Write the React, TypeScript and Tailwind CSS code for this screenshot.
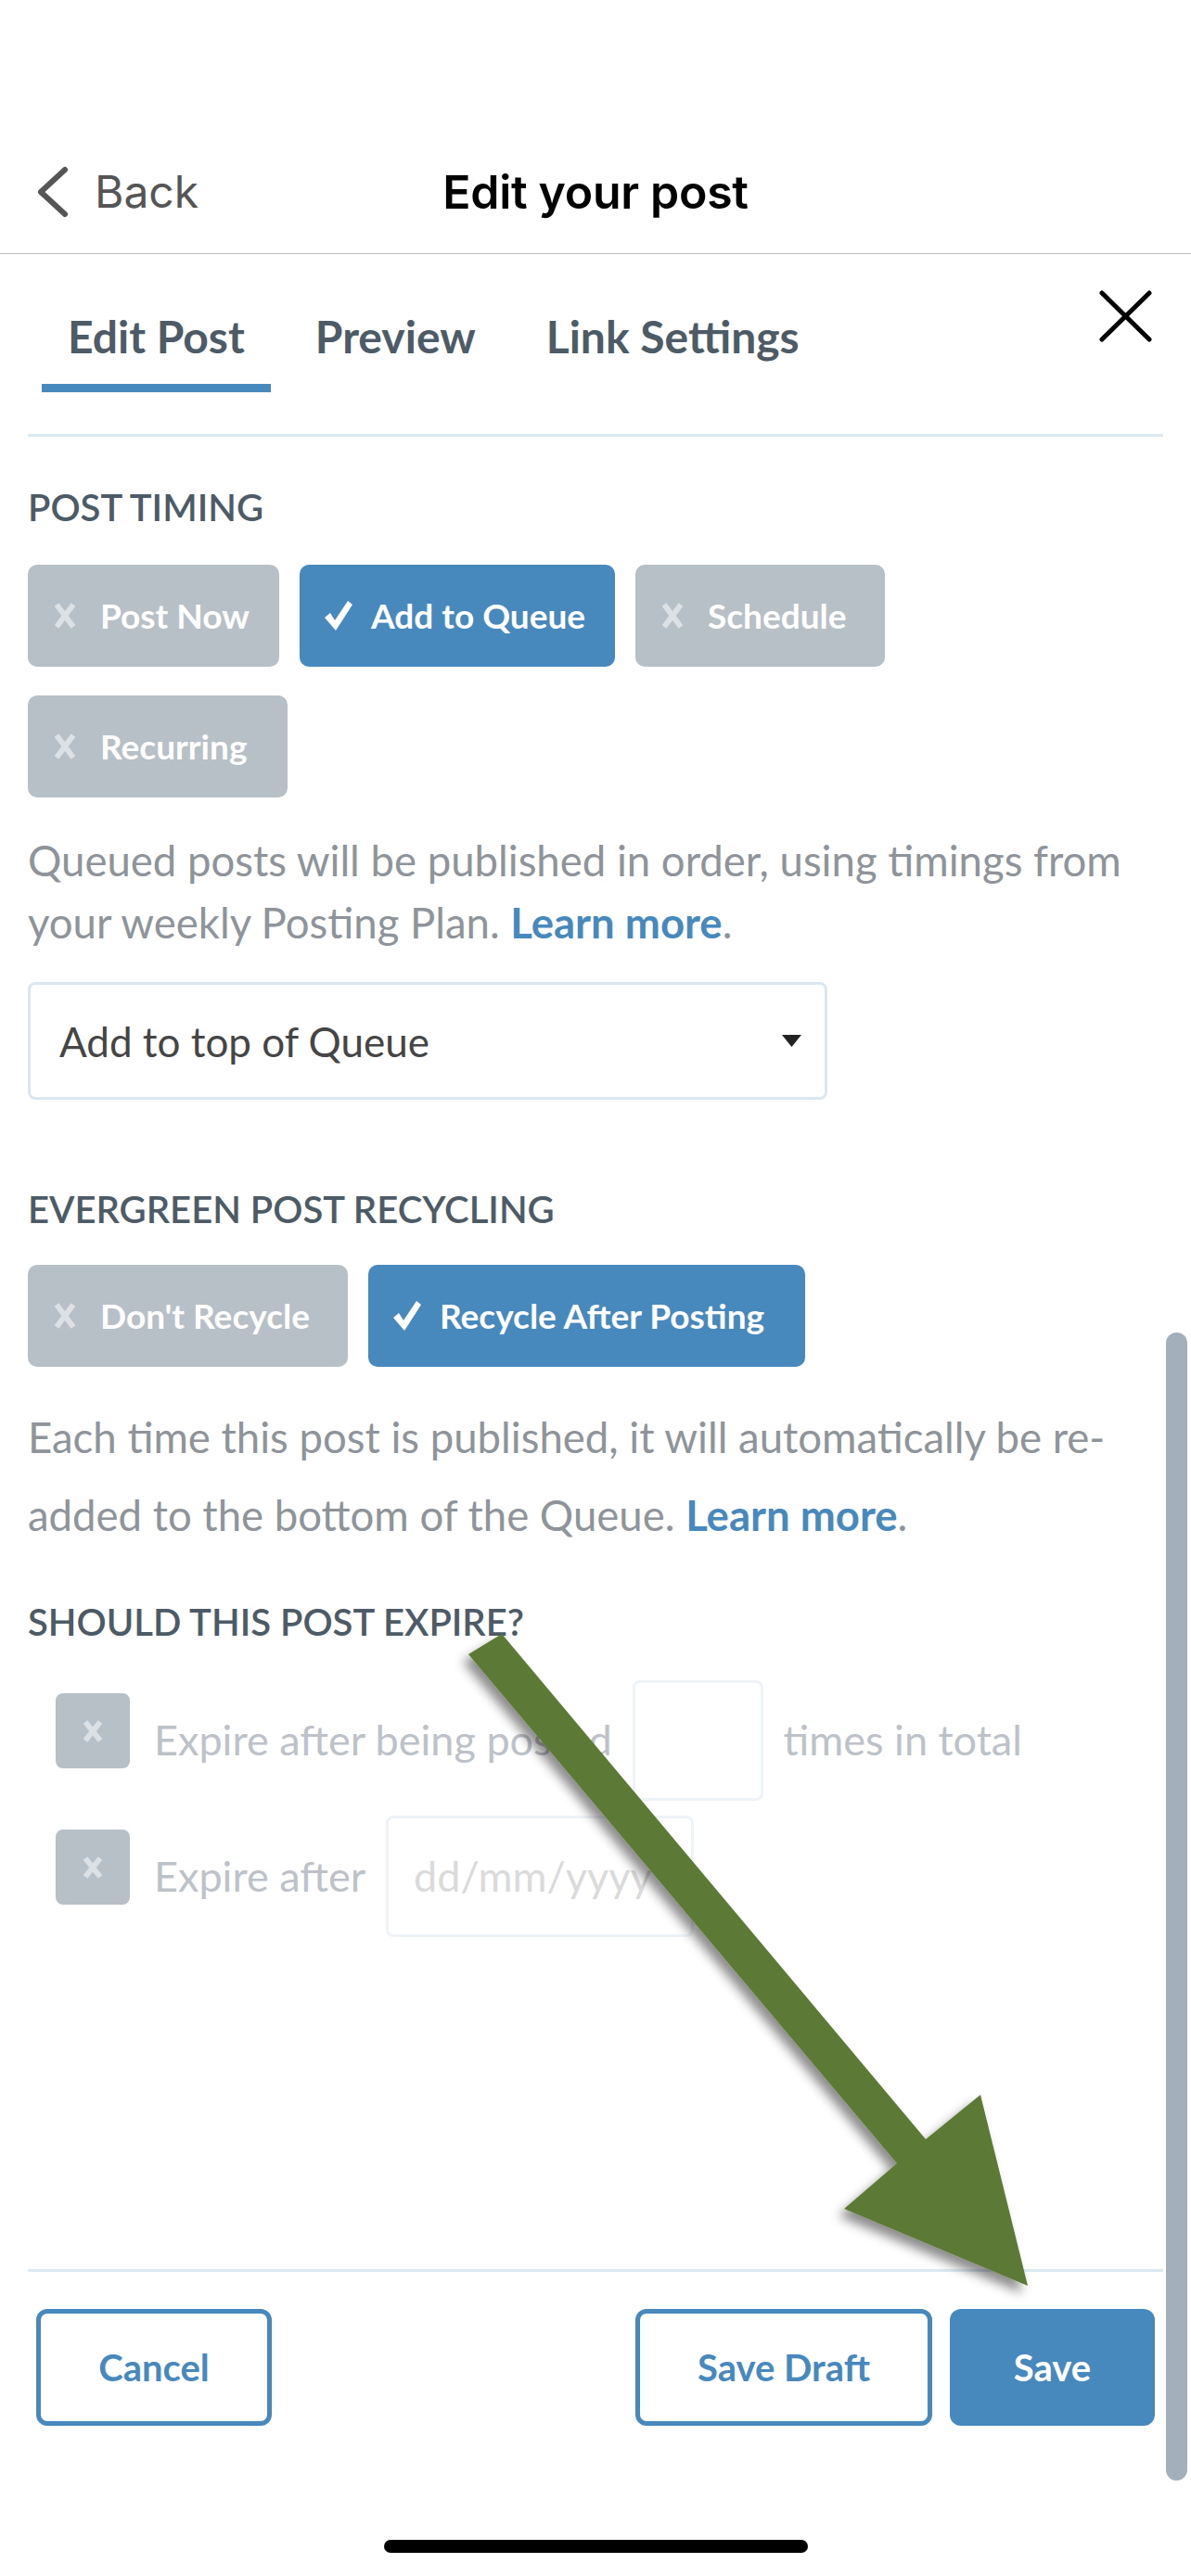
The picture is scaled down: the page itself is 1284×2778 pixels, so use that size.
import React from "react";

const XSmall = ({ w = 24, h = 30, color = "#dde1e4", sw = 6 }: { w?: number; h?: number; color?: string; sw?: number }) => (
  <svg width={w} height={h} viewBox={`0 0 ${w} ${h}`} className="shrink-0">
    <line x1="3" y1="3" x2={w - 3} y2={h - 3} stroke={color} strokeWidth={sw} strokeLinecap="butt" />
    <line x1={w - 3} y1="3" x2="3" y2={h - 3} stroke={color} strokeWidth={sw} strokeLinecap="butt" />
  </svg>
);

const Check = () => (
  <svg width="34" height="34" viewBox="0 0 34 34" className="shrink-0">
    <path d="M2 19 L8 14 L13 22 L27 1 L32 5 L14 33 Z" fill="white" />
  </svg>
);

function Toggle({ label, active, width }: { label: string; active?: boolean; width: string }) {
  if (active) {
    return (
      <div className={`h-[110px] ${width} rounded-[10px] bg-[#4889bd] flex items-center pl-[25px] gap-[18px] text-white font-bold text-[37px]`}>
        <Check />
        <span>{label}</span>
      </div>
    );
  }
  return (
    <div className={`h-[110px] ${width} rounded-[10px] bg-[#b8c0c7] flex items-center pl-[28px] gap-[26px] text-white font-bold text-[37px]`}>
      <XSmall />
      <span>{label}</span>
    </div>
  );
}

export default function App() {
  return (
    <div className="relative w-[1284px] h-[2778px] bg-white overflow-hidden flex flex-col font-['Lato',sans-serif]">
      {/* status bar space */}
      <div className="h-[141px] shrink-0" />
      {/* nav bar */}
      <div className="h-[132px] shrink-0 grid grid-cols-[1fr_auto_1fr] items-center font-['Inter',sans-serif]">
        <div className="flex items-center pl-[40px] gap-[28px] text-[#555555] text-[48px]">
          <svg width="34" height="56" viewBox="0 0 34 56">
            <polyline points="30,4 4,28 30,52" fill="none" stroke="#555555" strokeWidth="6" strokeLinecap="round" strokeLinejoin="round" />
          </svg>
          <span className="leading-none">Back</span>
        </div>
        <div className="text-[50px] font-semibold text-black leading-none tracking-[-0.3px]">Edit your post</div>
        <div />
      </div>
      <div className="h-px bg-[#bdbdbd] shrink-0" />

      {/* tabs */}
      <div className="shrink-0 pt-[39px] pl-[45px] pr-[42px] flex items-start">
        <div className="flex gap-[20px] mt-[20px]">
          <div className="flex flex-col">
            <span className="px-[28px] leading-[60px] text-[48px] font-bold text-[#4d5b67]">Edit Post</span>
            <div className="mt-[21px] h-[9px] bg-[#4889bd]" />
          </div>
          <div className="flex flex-col">
            <span className="px-[28px] leading-[60px] text-[48px] font-bold text-[#4d5b67]">Preview</span>
            <div className="mt-[21px] h-[9px]" />
          </div>
          <div className="flex flex-col">
            <span className="px-[28px] leading-[60px] text-[48px] font-bold text-[#4d5b67]">Link Settings</span>
            <div className="mt-[21px] h-[9px]" />
          </div>
        </div>
        <svg className="ml-auto" width="57" height="56" viewBox="0 0 57 56">
          <line x1="3" y1="3" x2="54" y2="53" stroke="#000" strokeWidth="5" strokeLinecap="round" />
          <line x1="54" y1="3" x2="3" y2="53" stroke="#000" strokeWidth="5" strokeLinecap="round" />
        </svg>
      </div>
      <div className="mt-[45px] mx-[30px] h-[3px] bg-[#dde9f2] shrink-0" />

      {/* content */}
      <div className="flex-1 px-[30px]">
        <div className="mt-[51px] leading-[50px] text-[40px] font-semibold text-[#4d5b67]">POST TIMING</div>
        <div className="mt-[37px] max-w-[1000px] flex flex-wrap gap-x-[22px] gap-y-[31px]">
          <Toggle label="Post Now" width="w-[271px]" />
          <Toggle label="Add to Queue" width="w-[340px]" active />
          <Toggle label="Schedule" width="w-[269px]" />
          <Toggle label="Recurring" width="w-[280px]" />
        </div>
        <p className="mt-[34px] leading-[67px] text-[45.5px] text-[#8e949a]">
          Queued posts will be published in order, using timings from your weekly Posting Plan.{" "}
          <span className="font-bold text-[#4889bd]">Learn more</span>.
        </p>
        <div className="mt-[31px] h-[127px] w-[862px] border-[3px] border-[#dbe7f0] rounded-[8px] flex items-center pl-[31px] pr-[25px]">
          <span className="text-[44px] text-[#454545]">Add to top of Queue</span>
          <svg className="ml-auto" width="21" height="13" viewBox="0 0 21 13">
            <polygon points="0,0 21,0 10.5,13" fill="#222" />
          </svg>
        </div>

        <div className="mt-[93px] leading-[50px] text-[40px] font-semibold text-[#4d5b67]">EVERGREEN POST RECYCLING</div>
        <div className="mt-[35px] flex gap-[22px]">
          <Toggle label="Don't Recycle" width="w-[345px]" />
          <Toggle label="Recycle After Posting" width="w-[471px]" active />
        </div>
        <p className="mt-[34px] leading-[84px] text-[45.5px] text-[#8e949a]">
          Each time this post is published, it will automatically be re-added to the bottom of the Queue.{" "}
          <span className="font-bold text-[#4889bd]">Learn more</span>.
        </p>

        <div className="mt-[48px] leading-[50px] text-[40px] font-semibold text-[#4d5b67]">SHOULD THIS POST EXPIRE?</div>
        <div className="mt-[38px] h-[130px] flex items-center pl-[30px] text-[45px] text-[#bcc2c8]">
          <div className="w-[80px] h-[81px] rounded-[8px] bg-[#b8c0c7] flex items-center justify-center self-start mt-[14px]">
            <XSmall w={22} h={26} color="#dde1e4" sw={6} />
          </div>
          <span className="ml-[26px]">Expire after being posted</span>
          <div className="ml-[22px] w-[141px] h-[130px] border-[3px] border-[#eef3f7] rounded-[8px]" />
          <span className="ml-[22px]">times in total</span>
        </div>
        <div className="mt-[16px] h-[131px] flex items-center pl-[30px] text-[45px] text-[#bcc2c8]">
          <div className="w-[80px] h-[81px] rounded-[8px] bg-[#b8c0c7] flex items-center justify-center self-start mt-[15px]">
            <XSmall w={22} h={26} color="#dde1e4" sw={6} />
          </div>
          <span className="ml-[26px]">Expire after</span>
          <div className="ml-[22px] w-[332px] h-[131px] border-[3px] border-[#eef3f7] rounded-[8px] flex items-center pl-[27px]">
            <span className="text-[#dadada]">dd/mm/yyyy</span>
          </div>
        </div>
      </div>

      {/* footer */}
      <div className="h-[331px] shrink-0 flex flex-col">
        <div className="mx-[30px] h-[3px] bg-[#dce9f2]" />
        <div className="mt-[40px] px-[39px] h-[126px] flex">
          <div className="w-[254px] h-full rounded-[12px] border-[5px] border-[#4889bd] flex items-center justify-center text-[#4889bd] font-bold text-[40px]">Cancel</div>
          <div className="ml-auto w-[320px] h-full rounded-[12px] border-[5px] border-[#4889bd] flex items-center justify-center text-[#4889bd] font-bold text-[40px]">Save Draft</div>
          <div className="ml-[19px] w-[221px] h-full rounded-[12px] bg-[#4889bd] flex items-center justify-center text-white font-bold text-[40px]">Save</div>
        </div>
        <div className="mt-[123px] mx-auto w-[457px] h-[14px] rounded-full bg-black" />
      </div>

      {/* scrollbar overlay */}
      <div className="absolute left-[1257px] top-[1437px] w-[23px] h-[1238px] rounded-full bg-[#a3afba]" />

      {/* annotation arrow overlay */}
      <svg className="absolute left-0 top-0 pointer-events-none" width="1284" height="2778" viewBox="0 0 1284 2778">
        <defs>
          <filter id="sh" x="-20%" y="-20%" width="140%" height="140%">
            <feDropShadow dx="-6" dy="8" stdDeviation="6" floodColor="#000" floodOpacity="0.45" />
          </filter>
        </defs>
        <polygon
          points="505,1784 541,1762 998,2307 1057,2259 1108,2465 910,2382 967,2333"
          fill="#5b7a35"
          filter="url(#sh)"
        />
      </svg>
    </div>
  );
}
